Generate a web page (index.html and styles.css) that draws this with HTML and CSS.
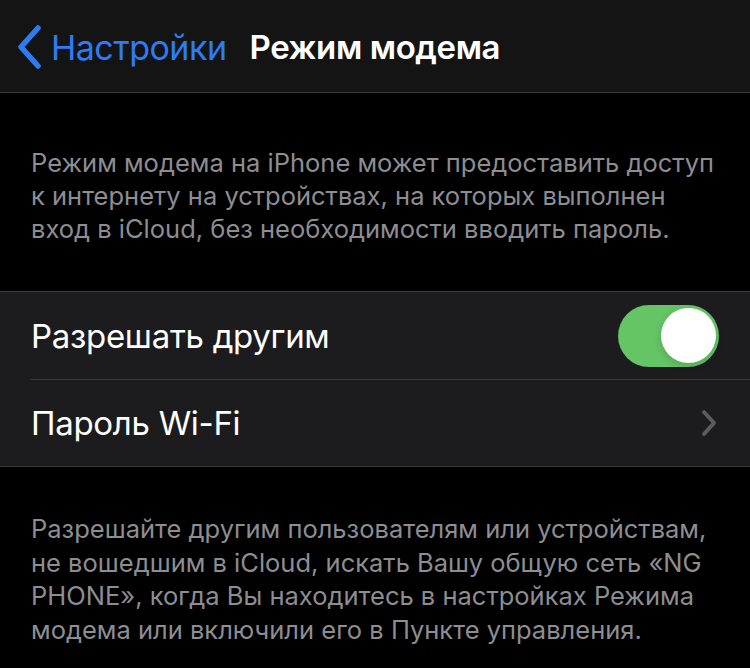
FILE: index.html
```html
<!DOCTYPE html>
<html lang="ru">
<head>
<meta charset="utf-8">
<link rel="stylesheet" href="styles.css">
</head>
<body>
<header class="nav">
  <a class="back">
    <svg class="back-icon" width="26" height="44" viewBox="0 0 26 44"><path d="M21 3 L4 22 L21 41" fill="none" stroke="#2d7cf6" stroke-width="5.5" stroke-linecap="round" stroke-linejoin="round"/></svg>
    <span class="back-text">Настройки</span>
  </a>
  <h1 class="title">Режим модема</h1>
</header>
<main class="content">
  <p class="note note-top">Режим модема на iPhone может предоставить доступ к интернету на устройствах, на которых выполнен вход в iCloud, без необходимости вводить пароль.</p>
  <section class="group">
    <div class="row">
      <span class="label">Разрешать другим</span>
      <span class="toggle"><span class="thumb"></span></span>
    </div>
    <div class="row">
      <span class="label">Пароль Wi-Fi</span>
      <svg class="chevron" width="16" height="28" viewBox="0 0 16 28"><path d="M3 3 L13 14 L3 25" fill="none" stroke="#5a5a5f" stroke-width="4" stroke-linecap="round" stroke-linejoin="round"/></svg>
    </div>
  </section>
  <p class="note note-bottom">Разрешайте другим пользователям или устройствам, не вошедшим в iCloud, искать Вашу общую сеть «NG PHONE», когда Вы находитесь в настройках Режима модема или включили его в Пункте управления.</p>
</main>
</body>
</html>
```
FILE: styles.css
```css
* { box-sizing: border-box; }
html, body { margin: 0; padding: 0; }
body {
  width: 750px;
  height: 668px;
  overflow: hidden;
  background: #000;
  font-family: Inter, "Noto Sans", sans-serif;
  color: #fff;
}
.nav {
  height: 93px;
  background: #141414;
  border-bottom: 1px solid #3a3a3c;
  display: flex;
  align-items: center;
  padding-left: 17px;
  padding-top: 2px;
}
.back {
  display: flex;
  align-items: center;
  gap: 8px;
  color: #2d7cf6;
}
.back-icon { display: block; }
.back-text {
  font-size: 34px;
  letter-spacing: -0.5px;
}
.title {
  margin: 0 0 0 23px;
  font-size: 33px;
  font-weight: 600;
  letter-spacing: -0.4px;
}
.note {
  margin: 0;
  color: #8d8d92;
  font-size: 25.5px;
  line-height: 33px;
  padding: 0 31px;
}
.note-top { padding-top: 53px; padding-bottom: 46px; }
.group {
  background: #1c1c1e;
  border-top: 1px solid #3a3a3c;
  border-bottom: 1px solid #3a3a3c;
}
.row {
  height: 87px;
  margin-left: 31px;
  padding-right: 31px;
  display: flex;
  align-items: center;
  justify-content: space-between;
}
.row + .row { border-top: 1px solid #3a3a3c; }
.label { font-size: 33px; letter-spacing: -0.3px; }
.toggle {
  width: 101px;
  height: 62px;
  border-radius: 31px;
  background: #65c466;
  display: flex;
  align-items: center;
  justify-content: flex-end;
  padding-right: 3px;
}
.thumb {
  width: 55px;
  height: 55px;
  border-radius: 50%;
  background: #fff;
  box-shadow: 0 3px 8px rgba(0,0,0,0.15);
}
.chevron { margin-right: 2px; }
.note-bottom { padding-top: 45px; line-height: 33.5px; }
```
